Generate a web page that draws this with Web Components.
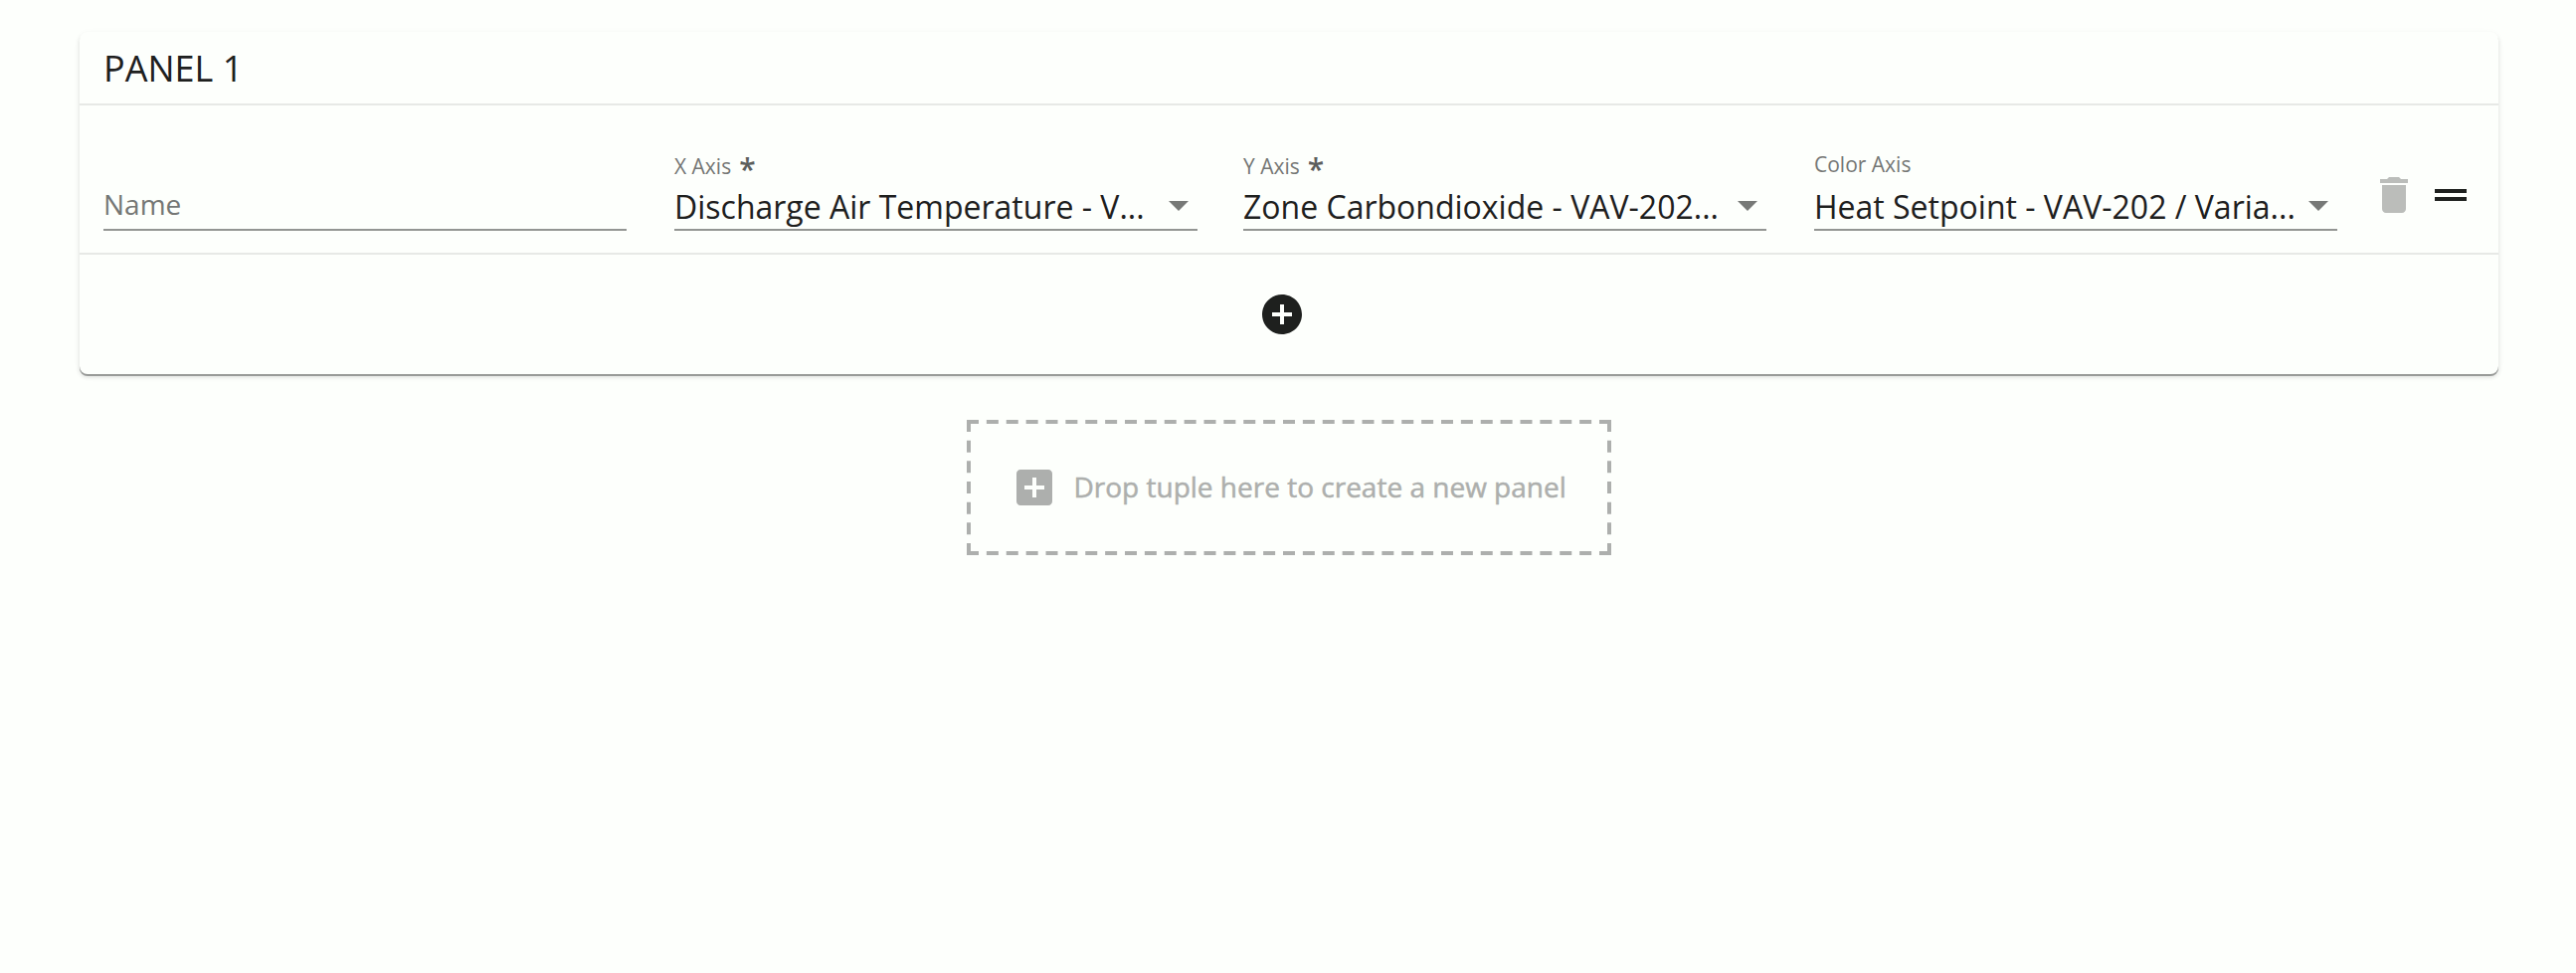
<!DOCTYPE html>
<html lang="en">
<head>
<meta charset="utf-8">
<title>Panels</title>
<style>
body { margin: 0; min-height: 978px; background: #fdfffc; color: #1e201e; font-family: "Open Sans", "Noto Sans", sans-serif; }
</style>
</head>
<body>
<panel-editor></panel-editor>
<script>
const define = (name, html, setup) => customElements.define(name, class extends HTMLElement {
  constructor() {
    super();
    this.attachShadow({ mode: 'open' }).innerHTML = html;
  }
  connectedCallback() { if (setup) setup(this, this.shadowRoot); }
});

const ICONS = {
  remove: 'M6 19c0 1.1.9 2 2 2h8c1.1 0 2-.9 2-2V7H6v12zM19 4h-3.5l-1-1h-5l-1 1H5v2h14V4z',
  handle: 'M20 9H4v2h16V9zM4 15h16v-2H4v2z',
  addCircle: 'M12 2C6.48 2 2 6.48 2 12s4.48 10 10 10 10-4.48 10-10S17.52 2 12 2zm5 11h-4v4h-2v-4H7v-2h4V7h2v4h4v2z',
  addBox: 'M19 3H5c-1.11 0-2 .9-2 2v14c0 1.1.89 2 2 2h14c1.1 0 2-.9 2-2V5c0-1.1-.9-2-2-2zm-2 10h-4v4h-2v-4H7v-2h4V7h2v4h4v2z'
};

define('ui-icon', `
<style>:host { display: block; flex: none; width: 48px; height: 48px; } svg { display: block; width: 100%; height: 100%; fill: currentColor; }</style>
<svg viewBox="0 0 24 24"><path/></svg>`,
(host, root) => root.querySelector('path').setAttribute('d', ICONS[host.getAttribute('name')]));

define('form-field', `
<style>
:host { display: flex; flex-direction: column; width: 526px; height: 82px; min-width: 0; border-bottom: 2px solid #939593; }
.label { height: 34px; display: flex; font-size: 21px; line-height: 34px; color: #757775; white-space: pre; }
:host([required]) .label { padding-top: 2px; height: 32px; }
.star { display: none; font-size: 30px; font-weight: 600; color: #5c5e5c; margin-left: 8px; line-height: 40px; }
:host([required]) .star { display: block; }
.line { flex: 1; display: flex; align-items: center; justify-content: space-between; white-space: pre; }
.value { font-size: 32px; line-height: 44px; padding-top: 3px; }
.arrow { flex: none; width: 20px; height: 10px; margin: 2px 9px 0 0; background: #777977; clip-path: polygon(0 0, 100% 0, 50% 100%); }
:host([empty]) .value { font-size: 28px; color: #757775; padding: 0 0 2px; }
:host([empty]) .arrow { display: none; }
</style>
<div class="label"><span class="text"></span><span class="star">*</span></div>
<div class="line"><span class="value"><slot></slot></span><i class="arrow"></i></div>`,
(host, root) => root.querySelector('.text').textContent = host.getAttribute('label') || '');

define('tuple-row', `
<style>
:host { display: flex; align-items: flex-start; box-sizing: border-box; height: 148px; padding: 42px 24px 0; }
.fields { flex: 1; display: grid; grid-template-columns: 574px 572px 574px 526px; }
.actions { display: flex; gap: 9px; margin: 24px 0 0 33px; }
.off { color: #bbbdba; }
</style>
<div class="fields"><slot></slot></div>
<div class="actions"><ui-icon class="off" name="remove"></ui-icon><ui-icon name="handle"></ui-icon></div>`);

define('tuple-panel', `
<style>
:host { display: block; border-radius: 8px; overflow: hidden; box-shadow: 0 2px 0 #999b99, 0 3px 4px rgba(0,0,0,.12), 0 2px 8px rgba(0,0,0,.04); background: #fdfffc; }
header { box-sizing: border-box; height: 72px; line-height: 72px; padding: 1px 24px 0; font-size: 36px; }
.body { border: solid #e7e9e6; border-width: 2px 0; }
footer { display: flex; align-items: center; justify-content: center; height: 120px; padding-right: 14px; }
</style>
<header><slot name="title"></slot></header>
<div class="body"><slot></slot></div>
<footer><ui-icon name="addCircle"></ui-icon></footer>`);

define('drop-zone', `
<style>
:host { position: relative; display: flex; align-items: center; box-sizing: border-box; width: 648px; height: 136px; padding: 0 44px; gap: 16px; color: #adafad; font-size: 28px; white-space: nowrap; }
.edge { position: absolute; inset: 0; width: 648px; height: 136px; fill: none; stroke: currentColor; stroke-width: 4; }
span { padding-bottom: 2px; -webkit-text-stroke: .5px currentColor; }
</style>
<svg class="edge" viewBox="0 0 648 136">
<path stroke-dasharray="12 7.875" d="M0 2H648M0 134H648"/>
<path stroke-dasharray="12 8.667" d="M2 0V136M646 0V136"/>
</svg>
<ui-icon name="addBox"></ui-icon><span><slot></slot></span>`);

define('panel-editor', `
<style>
:host { display: flex; flex-direction: column; align-items: center; padding: 32px 78px 0 80px; }
tuple-panel { align-self: stretch; }
drop-zone { margin: 46px 1px 0 0; }
</style>
<tuple-panel>
<span slot="title">PANEL 1</span>
<tuple-row>
<form-field empty>Name</form-field>
<form-field label="X Axis" required>Discharge Air Temperature - V...</form-field>
<form-field label="Y Axis" required>Zone Carbondioxide - VAV-202...</form-field>
<form-field label="Color Axis">Heat Setpoint - VAV-202 / Varia...</form-field>
</tuple-row>
</tuple-panel>
<drop-zone>Drop tuple here to create a new panel</drop-zone>`);
</script>
</body>
</html>
